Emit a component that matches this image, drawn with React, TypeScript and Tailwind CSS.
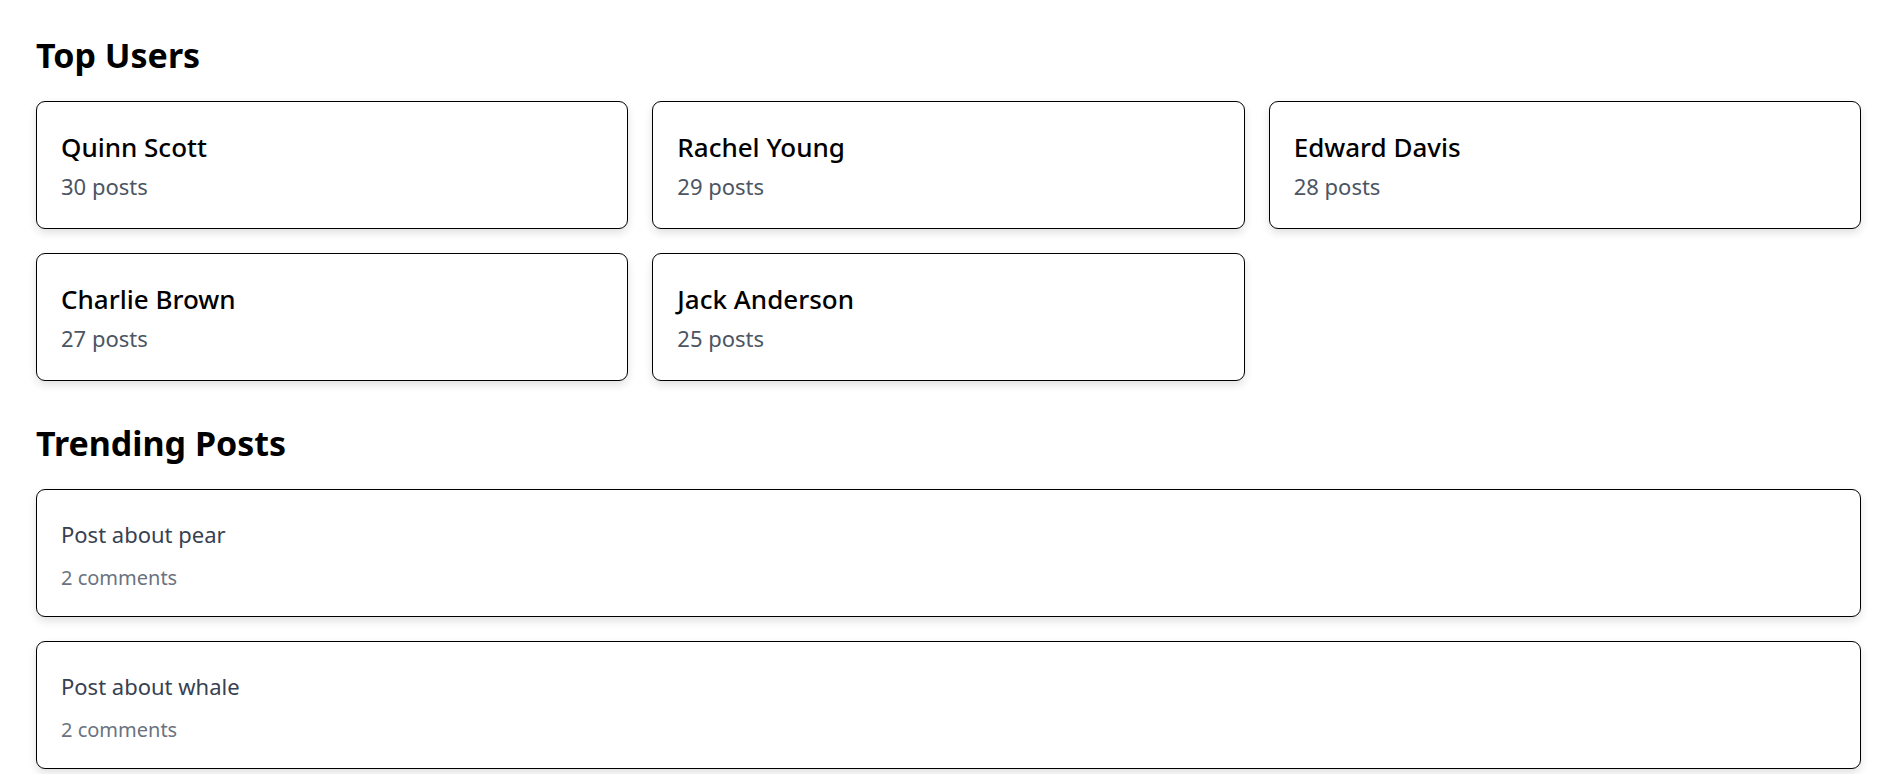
import React from "react";

const users = [
  { name: "Quinn Scott", posts: 30 },
  { name: "Rachel Young", posts: 29 },
  { name: "Edward Davis", posts: 28 },
  { name: "Charlie Brown", posts: 27 },
  { name: "Jack Anderson", posts: 25 },
];

const posts = [
  { title: "Post about pear", comments: 2 },
  { title: "Post about whale", comments: 2 },
];

export default function App() {
  return (
    <div
      className="min-h-screen bg-white pl-[36px] pr-[30px] pt-[35px] pb-10"
      style={{ fontFamily: '"Noto Sans", "Open Sans", sans-serif' }}
    >
      <h2 className="text-[34px] leading-[40px] font-bold text-black">Top Users</h2>
      <div className="mt-[26px] grid grid-cols-3 gap-6">
        {users.map((u) => (
          <div
            key={u.name}
            className="box-border h-[128px] rounded-[9px] border border-black bg-white px-[24px] pt-[29px] shadow-[0_4px_8px_rgba(0,0,0,0.12)]"
          >
            <div className="text-[26px] leading-[32px] font-medium text-black">{u.name}</div>
            <div className="mt-[9px] text-[22px] leading-[28px] text-[#4b5563]">{u.posts} posts</div>
          </div>
        ))}
      </div>
      <h2 className="mt-[42px] text-[34px] leading-[40px] font-bold text-black">Trending Posts</h2>
      <div className="mt-[26px] flex flex-col gap-6">
        {posts.map((p) => (
          <div
            key={p.title}
            className="box-border h-[128px] rounded-[9px] border border-black bg-white px-[24px] pt-[30px] shadow-[0_4px_8px_rgba(0,0,0,0.12)]"
          >
            <div className="text-[22px] leading-[28px] text-[#374151]">{p.title}</div>
            <div className="mt-[16px] text-[20px] leading-[28px] text-[#6b7280]">{p.comments} comments</div>
          </div>
        ))}
      </div>
    </div>
  );
}
